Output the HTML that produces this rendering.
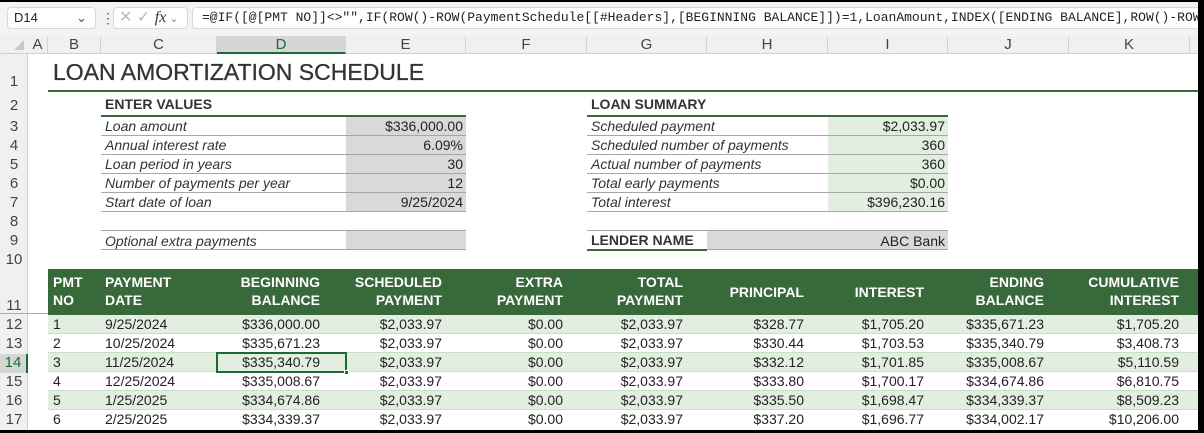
<!DOCTYPE html>
<html><head><meta charset="utf-8"><style>
*{margin:0;padding:0;box-sizing:border-box}
body{width:1204px;height:433px;overflow:hidden;background:#fff;font-family:"Liberation Sans",Arial,sans-serif;font-size:14px;color:#222;position:relative}
.a{position:absolute;white-space:nowrap}
.r{text-align:right}
.c{text-align:center}
.rn{position:absolute;left:0;width:28px;text-align:center;color:#444;font-size:15px}
.ch{position:absolute;top:36px;height:18px;text-align:center;color:#444;font-size:15px;line-height:18px;border-right:1px solid #d4d4d4}
.lbl{font-style:italic;color:#333}
.hdr{color:#fff;font-weight:bold;font-size:14px;line-height:18px}
</style></head><body>
<div class="a" style="left:0;top:0;width:1204px;height:36px;background:#f3f3f3"></div>
<div class="a" style="left:7px;top:7px;width:89px;height:22px;background:#fff;border:1px solid #d8d8d8;border-radius:4px;font-size:13px;line-height:20px;padding-left:6px">D14<span style="position:absolute;right:8px;color:#555">&#8964;</span></div>
<div class="a" style="left:101px;top:10px;color:#555;font-size:14px">&#8942;</div>
<div class="a" style="left:113px;top:7px;width:75px;height:22px;background:#fff;border:1px solid #d8d8d8;border-radius:4px;color:#bbb;font-size:16px;line-height:20px;padding-left:5px">&#10005; &#10003; <i style="color:#333;font-family:'Liberation Serif',serif">fx</i><span style="font-size:11px;color:#888"> &#8964;</span></div>
<div class="a" style="left:192px;top:7px;width:1012px;height:22px;background:#fff;border:1px solid #d8d8d8;border-radius:4px;font-family:'Liberation Mono',monospace;font-size:13px;line-height:20px;padding-left:9px;overflow:hidden">=@IF([@[PMT NO]]&lt;&gt;"",IF(ROW()-ROW(PaymentSchedule[[#Headers],[BEGINNING BALANCE]])=1,LoanAmount,INDEX([ENDING BALANCE],ROW()-ROW(PaymentSchedul</div>
<div class="a" style="left:0;top:36px;width:1204px;height:18px;background:#f0f0f0;border-bottom:1px solid #d0d0d0"></div>
<div class="a" style="left:14px;top:40px;width:0;height:0;border-left:10px solid transparent;border-bottom:10px solid #c8c8c8"></div>
<div class="ch" style="left:28px;width:20px">A</div>
<div class="ch" style="left:48px;width:53px">B</div>
<div class="ch" style="left:101px;width:116px">C</div>
<div class="ch" style="left:217px;width:129px;background:#d6d6d6;color:#1e6a35;border-bottom:2px solid #1e6a35">D</div>
<div class="ch" style="left:346px;width:120px">E</div>
<div class="ch" style="left:466px;width:121px">F</div>
<div class="ch" style="left:587px;width:120px">G</div>
<div class="ch" style="left:707px;width:121px">H</div>
<div class="ch" style="left:828px;width:120px">I</div>
<div class="ch" style="left:948px;width:121px">J</div>
<div class="ch" style="left:1069px;width:121px">K</div>
<div class="a" style="left:0;top:54px;width:28px;height:379px;background:#f0f0f0;border-right:1px solid #d0d0d0"></div>
<div class="rn" style="top:73px">1</div>
<div class="rn" style="top:97px">2</div>
<div class="rn" style="top:118px">3</div>
<div class="rn" style="top:137px">4</div>
<div class="rn" style="top:156px">5</div>
<div class="rn" style="top:175px">6</div>
<div class="rn" style="top:194px">7</div>
<div class="rn" style="top:213px">8</div>
<div class="rn" style="top:232px">9</div>
<div class="rn" style="top:251px">10</div>
<div class="a" style="left:0;top:313px;width:48px;height:1px;background:#aaa"></div>
<div class="rn" style="top:297px">11</div>
<div class="rn" style="top:316px">12</div>
<div class="rn" style="top:335px">13</div>
<div class="rn" style="top:354px;background:#d6d6d6;color:#1e6a35;height:19px;border-right:2px solid #1e6a35">14</div>
<div class="rn" style="top:373px">15</div>
<div class="rn" style="top:392px">16</div>
<div class="rn" style="top:411px">17</div>
<div class="a" style="left:53px;top:59px;font-size:23px;color:#333;-webkit-text-stroke:0.3px #333">LOAN AMORTIZATION SCHEDULE</div>
<div class="a" style="left:48px;top:90px;width:1152px;height:2px;background:#38693a"></div>
<div class="a" style="left:105px;top:96px;font-weight:bold;font-size:14px;color:#333">ENTER VALUES</div>
<div class="a" style="left:101px;top:115px;width:365px;height:2px;background:#38693a"></div>
<div class="a" style="left:346px;top:117px;width:120px;height:95px;background:#d9d9d9"></div>
<div class="a" style="left:346px;top:231px;width:120px;height:19px;background:#d9d9d9"></div>
<div class="a" style="left:101px;top:135px;width:365px;height:1px;background:#a6a6a6"></div>
<div class="a" style="left:101px;top:154px;width:365px;height:1px;background:#a6a6a6"></div>
<div class="a" style="left:101px;top:173px;width:365px;height:1px;background:#a6a6a6"></div>
<div class="a" style="left:101px;top:192px;width:365px;height:1px;background:#a6a6a6"></div>
<div class="a" style="left:101px;top:211px;width:365px;height:1px;background:#a6a6a6"></div>
<div class="a" style="left:101px;top:230px;width:365px;height:1px;background:#a6a6a6"></div>
<div class="a" style="left:101px;top:249px;width:365px;height:1px;background:#a6a6a6"></div>
<div class="a lbl" style="left:105px;top:118px">Loan amount</div>
<div class="a lbl" style="left:105px;top:137px">Annual interest rate</div>
<div class="a lbl" style="left:105px;top:156px">Loan period in years</div>
<div class="a lbl" style="left:105px;top:175px">Number of payments per year</div>
<div class="a lbl" style="left:105px;top:194px">Start date of loan</div>
<div class="a lbl" style="left:105px;top:233px">Optional extra payments</div>
<div class="a r" style="left:346px;width:117px;top:118px">$336,000.00</div>
<div class="a r" style="left:346px;width:117px;top:137px">6.09%</div>
<div class="a r" style="left:346px;width:117px;top:156px">30</div>
<div class="a r" style="left:346px;width:117px;top:175px">12</div>
<div class="a r" style="left:346px;width:117px;top:194px">9/25/2024</div>
<div class="a" style="left:591px;top:96px;font-weight:bold;font-size:14px;color:#333">LOAN SUMMARY</div>
<div class="a" style="left:587px;top:115px;width:361px;height:2px;background:#38693a"></div>
<div class="a" style="left:828px;top:117px;width:120px;height:95px;background:#e2efe0"></div>
<div class="a" style="left:587px;top:135px;width:361px;height:1px;background:#a6a6a6"></div>
<div class="a" style="left:587px;top:154px;width:361px;height:1px;background:#a6a6a6"></div>
<div class="a" style="left:587px;top:173px;width:361px;height:1px;background:#a6a6a6"></div>
<div class="a" style="left:587px;top:192px;width:361px;height:1px;background:#a6a6a6"></div>
<div class="a" style="left:587px;top:211px;width:361px;height:1px;background:#a6a6a6"></div>
<div class="a lbl" style="left:591px;top:118px">Scheduled payment</div>
<div class="a lbl" style="left:591px;top:137px">Scheduled number of payments</div>
<div class="a lbl" style="left:591px;top:156px">Actual number of payments</div>
<div class="a lbl" style="left:591px;top:175px">Total early payments</div>
<div class="a lbl" style="left:591px;top:194px">Total interest</div>
<div class="a r" style="left:828px;width:117px;top:118px">$2,033.97</div>
<div class="a r" style="left:828px;width:117px;top:137px">360</div>
<div class="a r" style="left:828px;width:117px;top:156px">360</div>
<div class="a r" style="left:828px;width:117px;top:175px">$0.00</div>
<div class="a r" style="left:828px;width:117px;top:194px">$396,230.16</div>
<div class="a" style="left:587px;top:230px;width:361px;height:1px;background:#a6a6a6"></div>
<div class="a" style="left:707px;top:231px;width:241px;height:19px;background:#d9d9d9"></div>
<div class="a" style="left:587px;top:249px;width:120px;height:2px;background:#38693a"></div>
<div class="a" style="left:707px;top:249px;width:241px;height:1px;background:#a6a6a6"></div>
<div class="a" style="left:591px;top:232px;font-weight:bold;color:#333">LENDER NAME</div>
<div class="a r" style="left:707px;width:238px;top:233px">ABC Bank</div>
<div class="a" style="left:48px;top:269px;width:1150px;height:46px;background:#38693a"></div>
<div class="a hdr" style="left:53px;top:273px">PMT<br>NO</div>
<div class="a hdr" style="left:105px;top:273px">PAYMENT<br>DATE</div>
<div class="a hdr r" style="left:217px;width:103px;top:273px">BEGINNING<br>BALANCE</div>
<div class="a hdr r" style="left:346px;width:96px;top:273px">SCHEDULED<br>PAYMENT</div>
<div class="a hdr r" style="left:466px;width:97px;top:273px">EXTRA<br>PAYMENT</div>
<div class="a hdr r" style="left:587px;width:96px;top:273px">TOTAL<br>PAYMENT</div>
<div class="a hdr r" style="left:707px;width:97px;top:283px">PRINCIPAL</div>
<div class="a hdr r" style="left:828px;width:96px;top:283px">INTEREST</div>
<div class="a hdr r" style="left:948px;width:96px;top:273px">ENDING<br>BALANCE</div>
<div class="a hdr r" style="left:1069px;width:110px;top:273px">CUMULATIVE<br>INTEREST</div>
<div class="a" style="left:48px;top:315px;width:1150px;height:19px;background:#e2efe0;border-bottom:1px solid #c6e0c4"></div>
<div class="a" style="left:48px;top:334px;width:1150px;height:19px;border-bottom:1px solid #c6e0c4"></div>
<div class="a" style="left:48px;top:353px;width:1150px;height:19px;background:#e2efe0;border-bottom:1px solid #c6e0c4"></div>
<div class="a" style="left:48px;top:372px;width:1150px;height:19px;border-bottom:1px solid #c6e0c4"></div>
<div class="a" style="left:48px;top:391px;width:1150px;height:19px;background:#e2efe0;border-bottom:1px solid #c6e0c4"></div>
<div class="a" style="left:216px;top:352px;width:131px;height:21px;border:2px solid #1e6a35"></div>
<div class="a" style="left:344px;top:370px;width:5px;height:5px;background:#1e6a35;border:1px solid #fff"></div>
<div style="position:absolute;left:0;top:316px">
<div class="a" style="left:53px;top:0">1</div><div class="a" style="left:105px;top:0">9/25/2024</div>
<div class="a r" style="left:217px;width:103px;top:0">$336,000.00</div><div class="a r" style="left:346px;width:96px;top:0">$2,033.97</div>
<div class="a r" style="left:466px;width:97px;top:0">$0.00</div><div class="a r" style="left:587px;width:96px;top:0">$2,033.97</div>
<div class="a r" style="left:707px;width:97px;top:0">$328.77</div><div class="a r" style="left:828px;width:96px;top:0">$1,705.20</div>
<div class="a r" style="left:948px;width:96px;top:0">$335,671.23</div><div class="a r" style="left:1069px;width:110px;top:0">$1,705.20</div>
</div>
<div style="position:absolute;left:0;top:335px">
<div class="a" style="left:53px;top:0">2</div><div class="a" style="left:105px;top:0">10/25/2024</div>
<div class="a r" style="left:217px;width:103px;top:0">$335,671.23</div><div class="a r" style="left:346px;width:96px;top:0">$2,033.97</div>
<div class="a r" style="left:466px;width:97px;top:0">$0.00</div><div class="a r" style="left:587px;width:96px;top:0">$2,033.97</div>
<div class="a r" style="left:707px;width:97px;top:0">$330.44</div><div class="a r" style="left:828px;width:96px;top:0">$1,703.53</div>
<div class="a r" style="left:948px;width:96px;top:0">$335,340.79</div><div class="a r" style="left:1069px;width:110px;top:0">$3,408.73</div>
</div>
<div style="position:absolute;left:0;top:354px">
<div class="a" style="left:53px;top:0">3</div><div class="a" style="left:105px;top:0">11/25/2024</div>
<div class="a r" style="left:217px;width:103px;top:0">$335,340.79</div><div class="a r" style="left:346px;width:96px;top:0">$2,033.97</div>
<div class="a r" style="left:466px;width:97px;top:0">$0.00</div><div class="a r" style="left:587px;width:96px;top:0">$2,033.97</div>
<div class="a r" style="left:707px;width:97px;top:0">$332.12</div><div class="a r" style="left:828px;width:96px;top:0">$1,701.85</div>
<div class="a r" style="left:948px;width:96px;top:0">$335,008.67</div><div class="a r" style="left:1069px;width:110px;top:0">$5,110.59</div>
</div>
<div style="position:absolute;left:0;top:373px">
<div class="a" style="left:53px;top:0">4</div><div class="a" style="left:105px;top:0">12/25/2024</div>
<div class="a r" style="left:217px;width:103px;top:0">$335,008.67</div><div class="a r" style="left:346px;width:96px;top:0">$2,033.97</div>
<div class="a r" style="left:466px;width:97px;top:0">$0.00</div><div class="a r" style="left:587px;width:96px;top:0">$2,033.97</div>
<div class="a r" style="left:707px;width:97px;top:0">$333.80</div><div class="a r" style="left:828px;width:96px;top:0">$1,700.17</div>
<div class="a r" style="left:948px;width:96px;top:0">$334,674.86</div><div class="a r" style="left:1069px;width:110px;top:0">$6,810.75</div>
</div>
<div style="position:absolute;left:0;top:392px">
<div class="a" style="left:53px;top:0">5</div><div class="a" style="left:105px;top:0">1/25/2025</div>
<div class="a r" style="left:217px;width:103px;top:0">$334,674.86</div><div class="a r" style="left:346px;width:96px;top:0">$2,033.97</div>
<div class="a r" style="left:466px;width:97px;top:0">$0.00</div><div class="a r" style="left:587px;width:96px;top:0">$2,033.97</div>
<div class="a r" style="left:707px;width:97px;top:0">$335.50</div><div class="a r" style="left:828px;width:96px;top:0">$1,698.47</div>
<div class="a r" style="left:948px;width:96px;top:0">$334,339.37</div><div class="a r" style="left:1069px;width:110px;top:0">$8,509.23</div>
</div>
<div style="position:absolute;left:0;top:411px">
<div class="a" style="left:53px;top:0">6</div><div class="a" style="left:105px;top:0">2/25/2025</div>
<div class="a r" style="left:217px;width:103px;top:0">$334,339.37</div><div class="a r" style="left:346px;width:96px;top:0">$2,033.97</div>
<div class="a r" style="left:466px;width:97px;top:0">$0.00</div><div class="a r" style="left:587px;width:96px;top:0">$2,033.97</div>
<div class="a r" style="left:707px;width:97px;top:0">$337.20</div><div class="a r" style="left:828px;width:96px;top:0">$1,696.77</div>
<div class="a r" style="left:948px;width:96px;top:0">$334,002.17</div><div class="a r" style="left:1069px;width:110px;top:0">$10,206.00</div>
</div>
<div class="a" style="left:0;top:0;width:1204px;height:2px;background:#000"></div>
<div class="a" style="left:1198px;top:0;width:6px;height:433px;background:#000"></div>
<div class="a" style="left:0;top:430px;width:1204px;height:3px;background:#000"></div>
</body></html>
